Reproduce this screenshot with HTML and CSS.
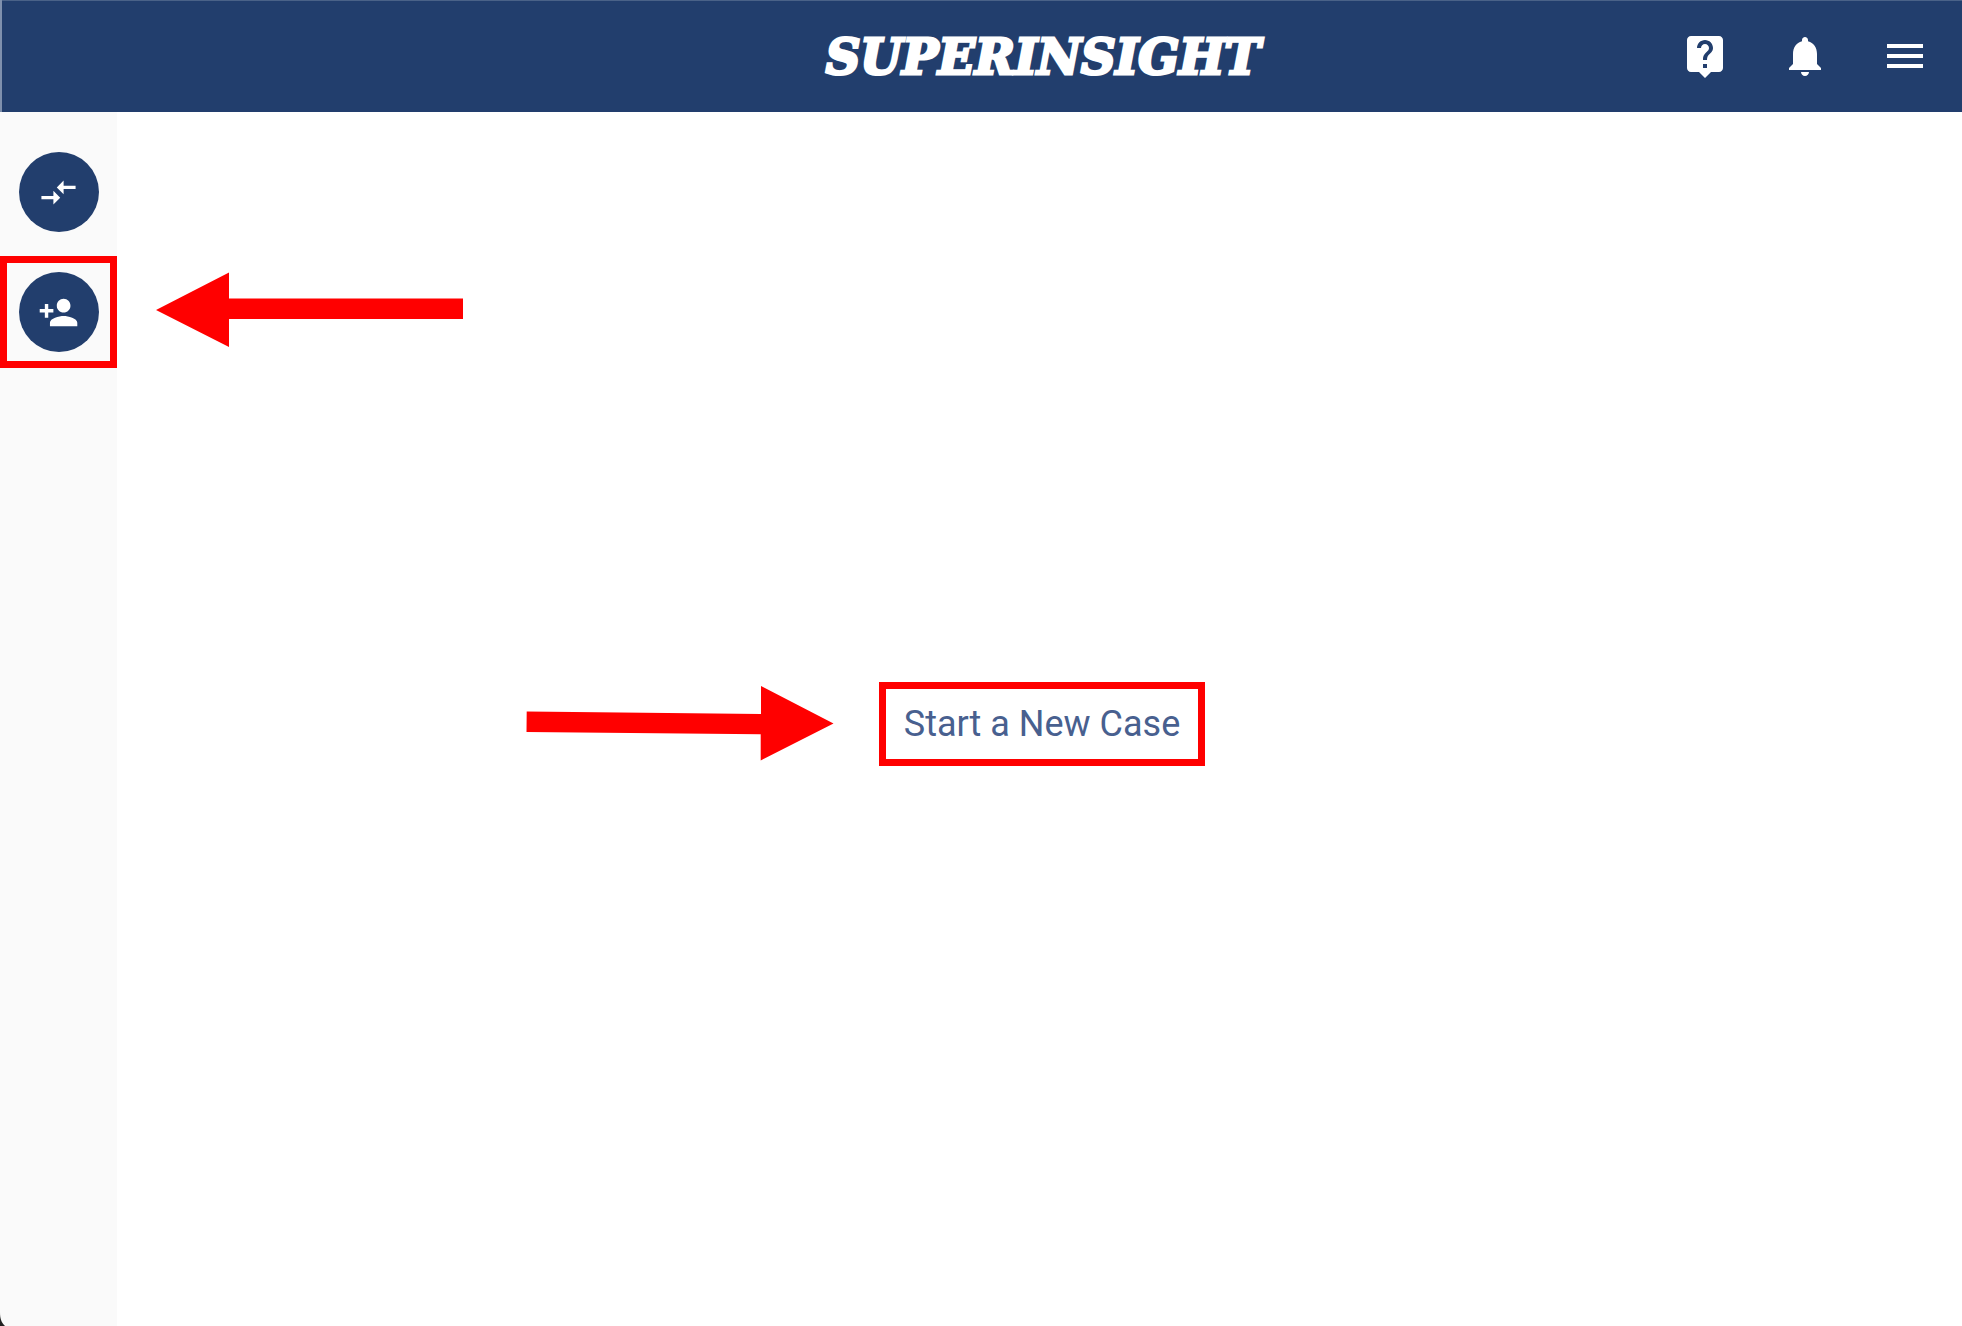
FILE: index.html
```html
<!DOCTYPE html>
<html lang="en">
<head>
<meta charset="utf-8">
<meta name="viewport" content="width=device-width, initial-scale=1">
<title>Superinsight</title>
<link rel="stylesheet" href="styles.css">
</head>
<body>
<div class="app">
  <header class="topbar">
    <div class="brand">SUPERINSIGHT</div>
    <nav class="actions" aria-label="Account">
      <button class="icon-button" type="button" aria-label="Help">
        <svg viewBox="0 0 24 24"><path d="M19 2H5c-1.110 0-2 .9-2 2v14c0 1.100.89 2 2 2h4l3 3 3-3h4c1.100 0 2-.9 2-2V4c0-1.100-.9-2-2-2zm-6 16h-2v-2h2v2zm2.070-7.750-.9.920C13.450 11.900 13 12.500 13 14h-2v-.5c0-1.100.45-2.100 1.170-2.830l1.240-1.260c.37-.36.59-.86.59-1.410 0-1.100-.9-2-2-2s-2 .9-2 2H8c0-2.210 1.790-4 4-4s4 1.790 4 4c0 .88-.36 1.680-.93 2.250z"/></svg>
      </button>
      <button class="icon-button" type="button" aria-label="Notifications">
        <svg viewBox="0 0 24 24"><path d="M12 22c1.100 0 2-.9 2-2h-4c0 1.100.89 2 2 2zm6-6v-5c0-3.070-1.640-5.640-4.500-6.320V4c0-.83-.67-1.500-1.500-1.500s-1.500.67-1.500 1.500v.68C7.630 5.360 6 7.920 6 11v5l-2 2v1h16v-1l-2-2z"/></svg>
      </button>
      <button class="icon-button" type="button" aria-label="Menu">
        <svg viewBox="0 0 24 24"><path d="M3 18h18v-2H3v2zm0-5h18v-2H3v2zm0-7v2h18V6H3z"/></svg>
      </button>
    </nav>
  </header>
  <div class="body">
    <aside class="sidebar">
      <button class="round-button" type="button" aria-label="Switch case">
        <svg viewBox="0 0 24 24"><path d="M9.010 14H2v2h7.010v3L13 15l-3.990-4v3zm5.980-1v-3H22V8h-7.010V5L11 9l3.990 4z"/></svg>
      </button>
      <div class="callout callout-side">
        <button class="round-button" type="button" aria-label="Add person">
          <svg viewBox="0 0 24 24"><path d="M15 12c2.210 0 4-1.790 4-4s-1.790-4-4-4-4 1.790-4 4 1.790 4 4 4zm-9-2V7H4v3H1v2h3v3h2v-3h3v-2H6zm9 4c-2.670 0-8 1.340-8 4v2h16v-2c0-2.660-5.330-4-8-4z"/></svg>
        </button>
        <svg class="arrow arrow-left" viewBox="0 0 308 76" aria-hidden="true"><path d="M0 38 73 0.500V26.500H307V47H73V75z"/></svg>
      </div>
      <svg class="window-corner" viewBox="0 0 5 14" aria-hidden="true"><path d="M0 0C0 6 1 10 5 14H0z"/></svg>
    </aside>
    <main class="content">
      <div class="callout callout-start">
        <svg class="arrow arrow-right" viewBox="0 0 308 76" aria-hidden="true"><path d="M0.700 26.500 235 29V1L307.500 38.500 234.700 75.500V49.300L0.500 47z"/></svg>
        <a class="start-link" href="#new-case">Start a New Case</a>
      </div>
    </main>
  </div>
</div>
</body>
</html>
```

FILE: styles.css
```css
* {
  box-sizing: border-box;
}

body {
  margin: 0;
  background: #fff;
  font-family: Roboto, "Liberation Sans", sans-serif;
}

.app {
  min-height: 100vh;
  display: flex;
  flex-direction: column;
}

svg {
  display: block;
  fill: currentColor;
}

.topbar {
  display: grid;
  grid-template-columns: 1fr auto 1fr;
  align-items: center;
  height: 112px;
  padding: 0 33px 0 157px;
  background: #223e6d;
  box-shadow: inset 2px 0 #7f90ad, inset 0 1px #4a6288;
  color: #fff;
}

.brand {
  grid-column: 2;
  padding-top: 2px;
  font: italic 700 48px/56px "DejaVu Serif", serif;
  -webkit-text-stroke: 3px #fff;
  white-space: nowrap;
}

.actions {
  display: flex;
  justify-content: flex-end;
  gap: 52px;
}

.icon-button,
.round-button {
  display: grid;
  place-items: center;
  padding: 0;
  border: 0;
  background: none;
  color: #fff;
  cursor: pointer;
}

.icon-button svg {
  width: 48px;
  height: 48px;
}

.body {
  flex: 1;
  display: flex;
}

.sidebar {
  position: relative;
  flex: none;
  width: 117px;
  padding-top: 40px;
  display: flex;
  flex-direction: column;
  align-items: center;
  gap: 24px;
  background: #fafafa;
}

.round-button {
  width: 80px;
  height: 80px;
  border-radius: 50%;
  background: #223e6d;
}

.round-button svg {
  width: 41px;
  height: 41px;
}

.callout {
  position: relative;
  border: 7px solid #f00;
}

.callout-side {
  align-self: stretch;
  display: flex;
  justify-content: center;
  padding: 9px 0;
}

.window-corner {
  position: absolute;
  left: 0;
  bottom: 0;
  width: 5px;
  height: 14px;
  color: #222;
}

.content {
  flex: 1;
  display: flex;
  align-items: center;
  justify-content: center;
  padding: 9px 0 0 5px;
}

.callout-start {
  padding: 14px 18px;
}

.start-link {
  display: block;
  color: #48608f;
  font-size: 36px;
  line-height: 42px;
  text-decoration: none;
  white-space: nowrap;
}

/* Pointers drawn over the page beside each highlighted control */
.arrow {
  position: absolute;
  width: 308px;
  height: 76px;
  color: #f00;
}

.arrow-left {
  left: 149px;
  top: 9px;
}

.arrow-right {
  right: 364px;
  top: -4px;
}
```
